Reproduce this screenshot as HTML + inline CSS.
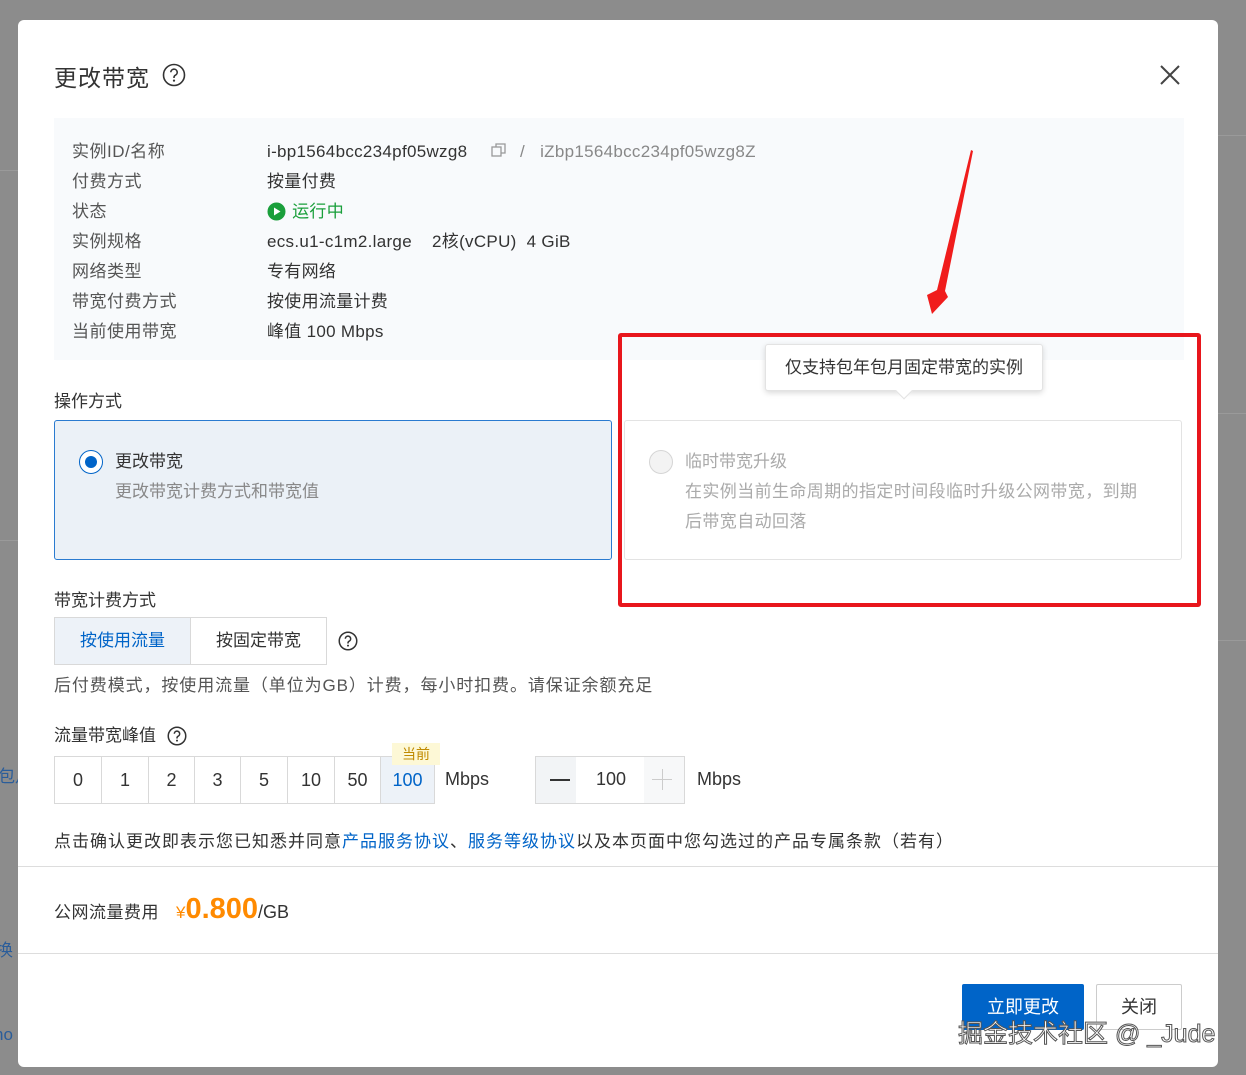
<!DOCTYPE html>
<html><head><meta charset="utf-8">
<style>
*{margin:0;padding:0;box-sizing:border-box}
body{width:1246px;height:1075px;background:#8c8c8c;position:relative;overflow:hidden;font-family:"Liberation Sans","Noto Sans CJK SC",sans-serif;color:#333;font-size:17px}
.a{position:absolute;white-space:nowrap}
#m{position:absolute;left:18px;top:20px;width:1200px;height:1047px;background:#fff;border-radius:6px}
.lbl{color:#555}
.bw{position:absolute;top:756px;height:48px;border:1px solid #d9d9d9;text-align:center;line-height:46px;font-size:18px;color:#333;background:#fff}
</style></head><body>
<div class="a" style="left:0;top:170px;width:18px;height:1px;background:#9a9a9a"></div>
<div class="a" style="left:0;top:540px;width:18px;height:1px;background:#9a9a9a"></div>
<div class="a" style="left:-2px;top:762px;color:#2a5d9a;font-size:17px">包月</div>
<div class="a" style="left:-4px;top:936px;color:#2a5d9a;font-size:17px">换</div>
<div class="a" style="left:-6px;top:1025px;color:#2a5d9a;font-size:17px">no</div>
<div class="a" style="left:1218px;top:135px;width:28px;height:1px;background:#9a9a9a"></div>
<div class="a" style="left:1218px;top:413px;width:28px;height:1px;background:#9a9a9a"></div>
<div class="a" style="left:1218px;top:640px;width:28px;height:1px;background:#9a9a9a"></div>
<div id="m"></div>
<div class="a" style="left:54px;top:59px;font-size:23px;color:#333;letter-spacing:1px">更改带宽</div>
<svg class="a" style="left:162px;top:63px" width="24" height="24" viewBox="0 0 24 24"><circle cx="12" cy="12" r="10.5" fill="none" stroke="#333" stroke-width="1.6"/><path d="M8.8 9.3a3.2 3.2 0 1 1 4.6 2.9c-1 .5-1.4 1.1-1.4 2.2v.6" fill="none" stroke="#333" stroke-width="1.6"/><circle cx="12" cy="17.6" r="1.1" fill="#333"/></svg>
<svg class="a" style="left:1159px;top:64px" width="22" height="22"><path d="M2 2L20 20M20 2L2 20" stroke="#444" stroke-width="2"/></svg>
<div class="a" style="left:54px;top:118px;width:1130px;height:242px;background:#f8fafc"></div>
<div class="a lbl" style="left:72px;top:137px;line-height:30px;letter-spacing:0.5px">实例ID/名称<br>付费方式<br>状态<br>实例规格<br>网络类型<br>带宽付费方式<br>当前使用带宽</div>
<div class="a" style="left:267px;top:137px;line-height:30px;color:#333;letter-spacing:0.3px">i-bp1564bcc234pf05wzg8<br>按量付费<br><span style="color:#1a9f3b">&nbsp;&nbsp;&nbsp;&nbsp;&nbsp;运行中</span><br>ecs.u1-c1m2.large&nbsp;&nbsp;&nbsp;&nbsp;2核(vCPU)&nbsp;&nbsp;4 GiB<br>专有网络<br>按使用流量计费<br>峰值 100 Mbps</div>
<svg class="a" style="left:267px;top:202px" width="19" height="19"><circle cx="9.5" cy="9.5" r="9" fill="#1a9f3b"/><path d="M7 5.5L13.5 9.5L7 13.5Z" fill="#fff"/></svg>
<svg class="a" style="left:490px;top:142px" width="18" height="16"><rect x="2" y="5" width="9" height="9" fill="none" stroke="#999" stroke-width="1.3"/><path d="M6 5V2h9v9h-4" fill="none" stroke="#999" stroke-width="1.3"/></svg>
<div class="a" style="left:520px;top:137px;line-height:30px;color:#888;letter-spacing:0.3px">/&nbsp;&nbsp;&nbsp;iZbp1564bcc234pf05wzg8Z</div>
<div class="a" style="left:54px;top:387px;color:#333">操作方式</div>
<div class="a" style="left:54px;top:420px;width:558px;height:140px;background:#ebf1f7;border:1px solid #2a7bd0;border-radius:3px"></div>
<div class="a" style="left:79px;top:450px;width:24px;height:24px;border-radius:50%;border:1.5px solid #0064c8;background:#fff"></div>
<div class="a" style="left:85px;top:456px;width:12px;height:12px;border-radius:50%;background:#0064c8"></div>
<div class="a" style="left:115px;top:447px;color:#333">更改带宽</div>
<div class="a" style="left:115px;top:477px;color:#888">更改带宽计费方式和带宽值</div>
<div class="a" style="left:624px;top:420px;width:558px;height:140px;background:#fff;border:1px solid #e3e3e3;border-radius:3px"></div>
<div class="a" style="left:649px;top:450px;width:24px;height:24px;border-radius:50%;border:1px solid #d5d5d5;background:#f3f3f3"></div>
<div class="a" style="left:685px;top:447px;color:#aaa">临时带宽升级</div>
<div class="a" style="left:685px;top:477px;color:#aaa;line-height:30px;letter-spacing:0.4px">在实例当前生命周期的指定时间段临时升级公网带宽，到期<br>后带宽自动回落</div>
<div class="a" style="left:765px;top:344px;width:278px;height:47px;background:#fff;border:1px solid #e3e3e3;border-radius:3px;box-shadow:0 2px 6px rgba(0,0,0,.15);text-align:center;line-height:45px;color:#333">仅支持包年包月固定带宽的实例</div>
<div class="a" style="left:898px;top:385px;width:12px;height:12px;background:#fff;transform:rotate(45deg);border-right:1px solid #e3e3e3;border-bottom:1px solid #e3e3e3"></div>
<div class="a" style="left:618px;top:333px;width:583px;height:274px;border:4px solid #e8161c;border-radius:3px"></div>
<svg class="a" style="left:0;top:0" width="1246" height="400"><polygon points="971,150 973,151 945,291 948,297 932,314 927,295 937,290" fill="#f01c1c"/></svg>
<div class="a" style="left:54px;top:586px;color:#333">带宽计费方式</div>
<div class="a" style="left:54px;top:617px;width:137px;height:48px;background:#edf2f8;border:1px solid #d9d9d9;text-align:center;line-height:46px;color:#0064c8">按使用流量</div>
<div class="a" style="left:190px;top:617px;width:137px;height:48px;background:#fff;border:1px solid #d9d9d9;text-align:center;line-height:46px;color:#333">按固定带宽</div>
<svg class="a" style="left:338px;top:631px" width="20" height="20" viewBox="0 0 24 24"><circle cx="12" cy="12" r="10.5" fill="none" stroke="#333" stroke-width="1.8"/><path d="M8.8 9.3a3.2 3.2 0 1 1 4.6 2.9c-1 .5-1.4 1.1-1.4 2.2v.6" fill="none" stroke="#333" stroke-width="1.8"/><circle cx="12" cy="17.6" r="1.2" fill="#333"/></svg>
<div class="a" style="left:54px;top:671px;color:#555;letter-spacing:0.9px">后付费模式，按使用流量（单位为GB）计费，每小时扣费。请保证余额充足</div>
<div class="a" style="left:54px;top:721px;color:#333">流量带宽峰值</div>
<svg class="a" style="left:167px;top:726px" width="20" height="20" viewBox="0 0 24 24"><circle cx="12" cy="12" r="10.5" fill="none" stroke="#333" stroke-width="1.8"/><path d="M8.8 9.3a3.2 3.2 0 1 1 4.6 2.9c-1 .5-1.4 1.1-1.4 2.2v.6" fill="none" stroke="#333" stroke-width="1.8"/><circle cx="12" cy="17.6" r="1.2" fill="#333"/></svg>
<div class="bw" style="left:54px;width:48px">0</div>
<div class="bw" style="left:101px;width:48px">1</div>
<div class="bw" style="left:148px;width:47px">2</div>
<div class="bw" style="left:194px;width:47px">3</div>
<div class="bw" style="left:240px;width:48px">5</div>
<div class="bw" style="left:287px;width:48px">10</div>
<div class="bw" style="left:334px;width:47px">50</div>
<div class="bw" style="left:380px;width:55px;background:#edf2f8;color:#0064c8">100</div>
<div class="a" style="left:392px;top:743px;width:48px;height:22px;background:#fdf8d6;color:#c08a00;font-size:14px;text-align:center;line-height:22px">当前</div>
<div class="a" style="left:445px;top:769px;font-size:18px;color:#333">Mbps</div>
<div class="a" style="left:535px;top:756px;width:150px;height:48px;border:1px solid #d9d9d9;background:#fff"></div>
<div class="a" style="left:536px;top:757px;width:40px;height:46px;background:#f2f4f6"></div>
<div class="a" style="left:644px;top:757px;width:40px;height:46px;background:#f7f8f9"></div>
<div class="a" style="left:550px;top:779px;width:20px;height:2px;background:#333"></div>
<div class="a" style="left:652px;top:779px;width:20px;height:1px;background:#ccc"></div>
<div class="a" style="left:662px;top:769px;width:1px;height:21px;background:#ccc"></div>
<div class="a" style="left:596px;top:769px;font-size:18px;color:#333">100</div>
<div class="a" style="left:697px;top:769px;font-size:18px;color:#333">Mbps</div>
<div class="a" style="left:54px;top:827px;color:#333;letter-spacing:1px">点击确认更改即表示您已知悉并同意<span style="color:#0064c8">产品服务协议</span>、<span style="color:#0064c8">服务等级协议</span>以及本页面中您勾选过的产品专属条款（若有）</div>
<div class="a" style="left:18px;top:866px;width:1200px;height:1px;background:#ddd"></div>
<div class="a" style="left:54px;top:898px;color:#333;letter-spacing:0.5px">公网流量费用</div>
<div class="a" style="left:176px;top:886px;color:#ff8a00;font-size:17px;line-height:46px">¥<span style="font-size:29px;font-weight:bold">0.800</span><span style="color:#333;font-size:18px">/GB</span></div>
<div class="a" style="left:18px;top:953px;width:1200px;height:1px;background:#ddd"></div>
<div class="a" style="left:962px;top:984px;width:122px;height:46px;background:#0064c8;border-radius:2px;color:#fff;text-align:center;line-height:46px;font-size:18px">立即更改</div>
<div class="a" style="left:1096px;top:984px;width:86px;height:46px;background:#fff;border:1px solid #ccc;border-radius:2px;color:#333;text-align:center;line-height:44px;font-size:18px">关闭</div>
<div class="a" style="left:958px;top:1014px;font-size:25px;color:#fff;-webkit-text-stroke:1px #555;letter-spacing:0">掘金技术社区 @ _Jude</div>
</body></html>
